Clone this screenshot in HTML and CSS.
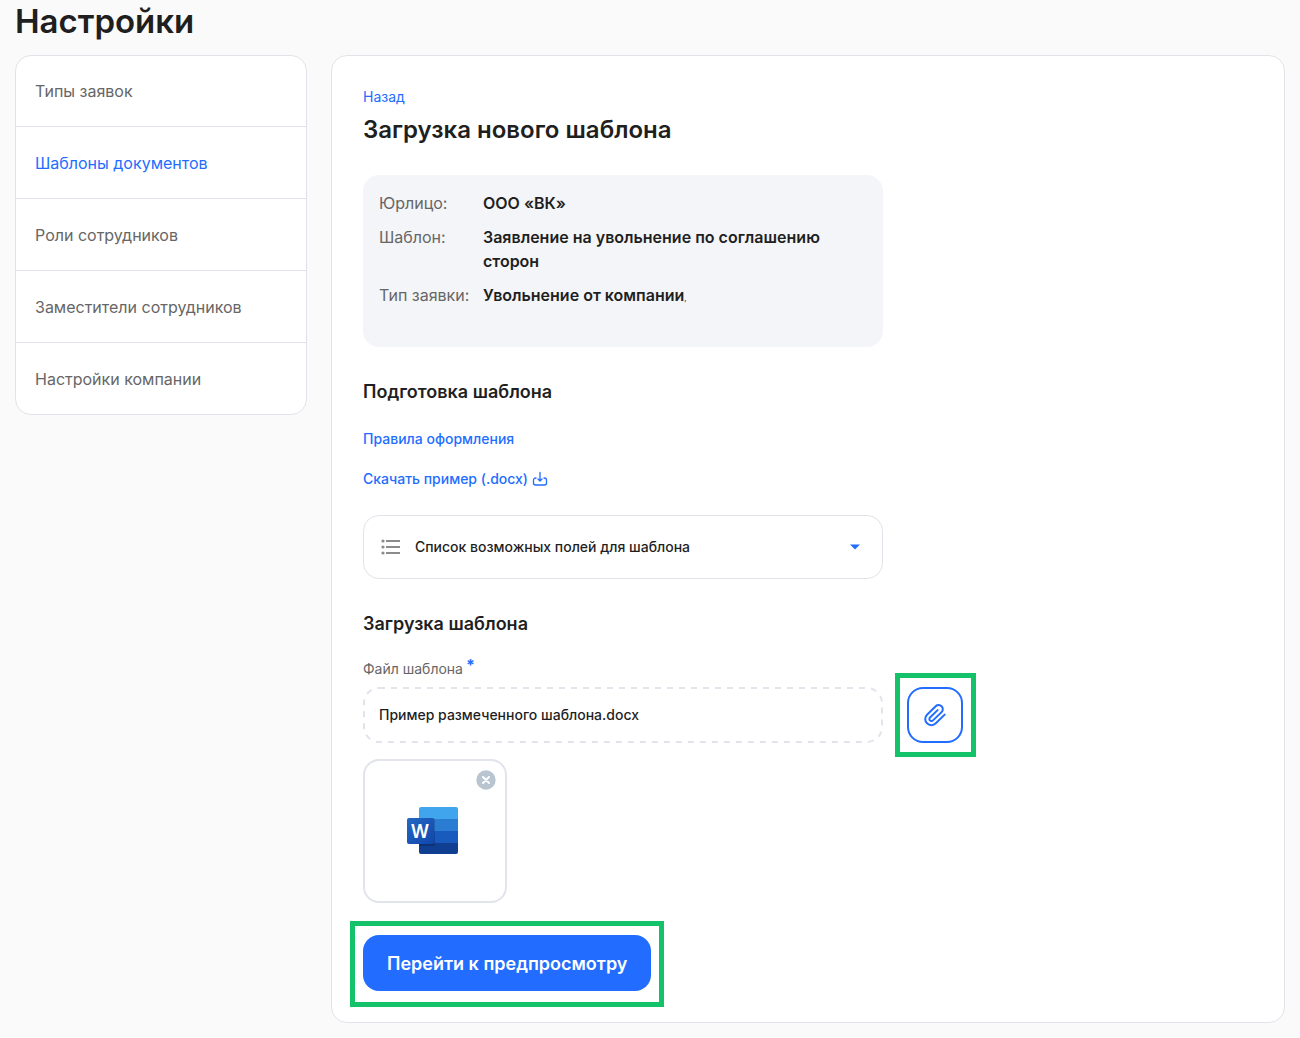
FILE: index.html
```html
<!DOCTYPE html>
<html lang="ru">
<head>
<meta charset="utf-8">
<meta name="viewport" content="width=device-width, initial-scale=1">
<title>Настройки</title>
<link rel="stylesheet" href="styles.css">
</head>
<body>
<div class="page">
  <h1 class="page-title">Настройки</h1>
  <div class="layout">
    <nav class="menu" aria-label="Разделы настроек">
      <a class="menu-item" href="#types">Типы заявок</a>
      <a class="menu-item is-active" href="#templates" aria-current="page">Шаблоны документов</a>
      <a class="menu-item" href="#roles">Роли сотрудников</a>
      <a class="menu-item" href="#deputies">Заместители сотрудников</a>
      <a class="menu-item" href="#company">Настройки компании</a>
    </nav>

    <main class="panel">
      <a class="back" href="#back">Назад</a>
      <h2 class="panel-title">Загрузка нового шаблона</h2>

      <dl class="info">
        <dt>Юрлицо:</dt>
        <dd>ООО «ВК»</dd>
        <dt>Шаблон:</dt>
        <dd>Заявление на увольнение по соглашению сторон</dd>
        <dt>Тип заявки:</dt>
        <dd>Увольнение от компании<span class="info-comma">,</span></dd>
      </dl>

      <h3 class="section-title">Подготовка шаблона</h3>
      <div class="links">
        <a class="link" href="#rules">Правила оформления</a>
        <a class="link" href="#sample">Скачать пример (.docx)
          <svg width="16" height="16" viewBox="0 0 16 16" fill="none" stroke="currentColor" stroke-width="1.3" stroke-linecap="round" stroke-linejoin="round" aria-hidden="true"><path d="M8 1.500v8.200M6 8l2 2 2-2M4 7h-.5a2 2 0 0 0-2 2v3a2 2 0 0 0 2 2h9a2 2 0 0 0 2-2V9a2 2 0 0 0-2-2H12"/></svg>
        </a>
      </div>

      <button class="accordion" type="button" aria-expanded="false">
        <svg width="20" height="16" viewBox="0 0 20 16" aria-hidden="true"><g fill="#8c8c8c"><circle cx="2" cy="2" r="1.600"/><circle cx="2" cy="8" r="1.600"/><circle cx="2" cy="14" r="1.600"/><path d="M5 1h14v2H5zM5 7h14v2H5zM5 13h14v2H5z"/></g></svg>
        <span class="accordion-text">Список возможных полей для шаблона</span>
        <svg width="10" height="6" viewBox="0 0 10 6" aria-hidden="true"><path d="M0 .5h10l-5 5z" fill="#226dff"/></svg>
      </button>

      <h3 class="section-title">Загрузка шаблона</h3>
      <label class="field-label" for="template-file">Файл шаблона <span class="required">*</span></label>
      <div class="upload">
        <div class="file-field">
          <svg class="file-outline" aria-hidden="true"><rect class="file-dashes" x="1" y="1" rx="15"/></svg>
          <input class="file-name" id="template-file" type="text" value="Пример размеченного шаблона.docx" readonly>
        </div>
        <div class="marked marked-attach">
          <button class="attach" type="button" aria-label="Прикрепить файл">
            <svg width="24" height="24" viewBox="0 0 24 24" fill="none" stroke="currentColor" stroke-width="2" stroke-linecap="round" stroke-linejoin="round" aria-hidden="true"><path d="m21.700 11.600-8.900 8.700a6.200 6.200 0 0 1-8.800 0 6 6 0 0 1 0-8.600l8.700-8.400a4.200 4.200 0 0 1 5.900 0 4.100 4.100 0 0 1 0 5.800l-8.600 8.300a2.100 2.100 0 0 1-3 0 2 2 0 0 1 0-2.900l7.600-7.400"/></svg>
          </button>
        </div>
      </div>

      <div class="file-card">
        <svg width="56" height="48" viewBox="0 0 56 48" role="img" aria-label="Документ Word">
          <defs>
            <linearGradient id="tile" x1="0" y1="0" x2="1" y2="1"><stop offset="0" stop-color="#2368c4"/><stop offset="1" stop-color="#1146ac"/></linearGradient>
            <clipPath id="sheet"><rect x="12" y="0" width="39" height="47" rx="2"/></clipPath>
          </defs>
          <g clip-path="url(#sheet)">
            <path fill="#41a5ee" d="M12 0h39v12H12z"/>
            <path fill="#2b7cd3" d="M12 12h39v12H12z"/>
            <path fill="#185abd" d="M12 24h39v12H12z"/>
            <path fill="#103f91" d="M12 36h39v11H12z"/>
            <path fill="#000" opacity=".18" d="M12 11h14a2 2 0 0 1 2 2v24a2 2 0 0 1-2 2H12z"/>
          </g>
          <rect x="0" y="11" width="27" height="26" rx="2" fill="url(#tile)"/>
          <text class="word-letter" x="13" y="31" text-anchor="middle">W</text>
        </svg>
        <button class="remove" type="button" aria-label="Удалить файл">
          <svg width="20" height="20" viewBox="0 0 20 20" aria-hidden="true"><circle cx="10" cy="10" r="9.700" fill="#b8c4d0"/><path d="m7 7 6 6m0-6-6 6" stroke="#fff" stroke-width="2" stroke-linecap="round"/></svg>
        </button>
      </div>

      <div class="marked marked-submit">
        <button class="submit" type="button">Перейти к предпросмотру</button>
      </div>
    </main>
  </div>
</div>
</body>
</html>
```

FILE: styles.css
```css
* {
  box-sizing: border-box;
}

body {
  margin: 0;
  background: #fafafa;
  color: #1f1f1f;
  font-family: Inter, "Noto Sans", sans-serif;
  font-size: 16px;
  line-height: 24px;
}

h1, h2, h3, dl, dd {
  margin: 0;
}

button, input {
  font: inherit;
  color: inherit;
}

button {
  padding: 0;
  cursor: pointer;
}

svg {
  display: block;
  flex: none;
}

a {
  color: #226dff;
  text-decoration: none;
}

.page {
  padding: 0 15px 15px;
}

.page-title {
  padding-bottom: 13px;
  font-size: 33px;
  font-weight: 600;
  line-height: 42px;
}

.layout {
  display: grid;
  grid-template-columns: 292px minmax(0, 1fr);
  gap: 24px;
  align-items: start;
}

.menu {
  border: 1px solid #e1e3e9;
  border-radius: 16px;
  background: #fff;
}

.menu-item {
  display: block;
  padding: 24px 19px 23px;
  color: #666;
}

.menu-item:first-child {
  padding-top: 23px;
}

.menu-item + .menu-item {
  border-top: 1px solid #e1e3e9;
}

.menu-item.is-active {
  color: #226dff;
}

.panel {
  display: flex;
  flex-direction: column;
  align-items: flex-start;
  padding: 31px;
  border: 1px solid #e1e3e9;
  border-radius: 16px;
  background: #fff;
}

.back {
  font-size: 14px;
  line-height: 20px;
}

.panel-title {
  margin-top: 7px;
  font-size: 24px;
  font-weight: 600;
  line-height: 32px;
}

.info {
  display: grid;
  grid-template-columns: 94px minmax(0, 1fr);
  gap: 10px;
  width: 100%;
  max-width: 520px;
  margin-top: 29px;
  padding: 16px 16px 40px;
  border-radius: 16px;
  background: #f4f5f8;
}

.info dt {
  color: #666;
  white-space: nowrap;
}

.info dd {
  font-weight: 600;
}

.info-comma {
  font-size: 8px;
  font-weight: 400;
  line-height: 8px;
}

.section-title {
  margin-top: 33px;
  font-size: 18px;
  font-weight: 600;
  line-height: 24px;
}

.links {
  display: flex;
  flex-direction: column;
  align-items: flex-start;
  gap: 20px;
  margin-top: 25px;
}

.link {
  display: flex;
  align-items: center;
  gap: 4px;
  font-size: 14px;
  font-weight: 500;
  line-height: 20px;
}

.accordion {
  display: flex;
  align-items: center;
  gap: 14px;
  width: 100%;
  max-width: 520px;
  height: 64px;
  margin-top: 26px;
  padding: 0 22px 0 17px;
  border: 1px solid #e1e3e9;
  border-radius: 16px;
  background: #fff;
  font-size: 14px;
  font-weight: 500;
  text-align: left;
}

.accordion-text {
  flex: 1;
}

.field-label {
  display: flex;
  gap: 3px;
  margin-top: 23px;
  color: #666;
  font-size: 14px;
  line-height: 20px;
}

.required {
  color: #226dff;
  font-size: 16px;
  font-weight: 700;
  line-height: 12px;
}

.upload {
  display: flex;
  align-items: center;
  gap: 24px;
  width: 100%;
  margin-top: 8px;
}

.file-field {
  position: relative;
  flex: 0 1 520px;
  min-width: 0;
}

.file-outline {
  position: absolute;
  inset: 0;
  width: 100%;
  height: 100%;
  pointer-events: none;
}

.file-dashes {
  width: calc(100% - 2px);
  height: calc(100% - 2px);
  fill: none;
  stroke: #e1e4ea;
  stroke-width: 2px;
  stroke-dasharray: 6 6;
}

.file-name {
  display: block;
  width: 100%;
  height: 56px;
  padding: 0 16px 2px;
  border: 0;
  border-radius: 16px;
  background: #fff;
  font-size: 14px;
  font-weight: 500;
}

/* Green frames that point at the controls of this step */
.marked {
  position: relative;
}

.marked::after {
  content: "";
  position: absolute;
  inset: -14px -13px;
  border: 5px solid #14c269;
  pointer-events: none;
}

.marked-attach::after {
  left: -12px;
}

.marked-submit::after {
  bottom: -16px;
}

.attach {
  display: grid;
  place-items: center;
  width: 56px;
  height: 56px;
  border: 2px solid #226dff;
  border-radius: 16px;
  background: #fff;
  color: #226dff;
}

.file-card {
  position: relative;
  display: grid;
  place-items: center;
  width: 144px;
  height: 144px;
  margin-top: 16px;
  border: 2px solid #e1e4ea;
  border-radius: 16px;
  background: #fff;
}

.word-letter {
  fill: #fff;
  font-size: 18px;
  font-weight: 600;
}

.remove {
  position: absolute;
  top: 9px;
  right: 9px;
  border: 0;
  background: none;
}

.marked-submit {
  margin-top: 32px;
}

.submit {
  display: block;
  height: 56px;
  padding: 2px 24px 0;
  border: 0;
  border-radius: 16px;
  background: #226dff;
  color: #fff;
  font-size: 18px;
  font-weight: 600;
}
```
